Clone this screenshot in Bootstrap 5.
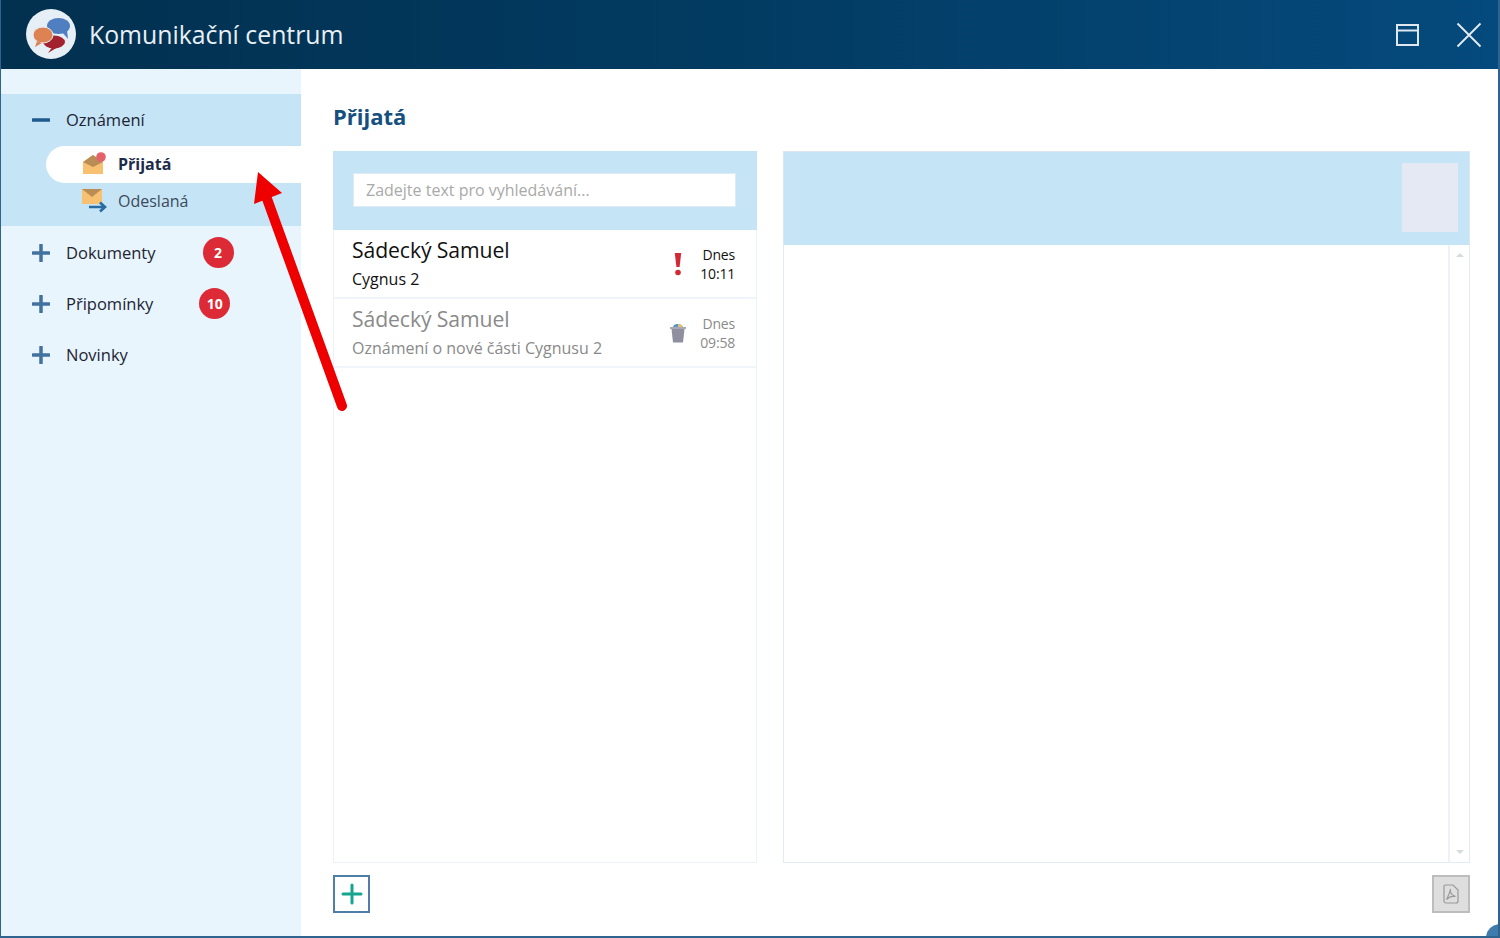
<!DOCTYPE html>
<html lang="cs">
<head>
<meta charset="utf-8">
<title>Komunikační centrum</title>
<link href="https://cdn.jsdelivr.net/npm/bootstrap@5.3.0/dist/css/bootstrap.min.css" rel="stylesheet">
<style>
html,body{height:100%;overflow:hidden;background:#fff}
body{font-family:"Open Sans","Liberation Sans",sans-serif;color:#1d2433}
.win{width:1500px;height:938px;position:relative;overflow:hidden;border:solid #2f6390;border-width:0 2px 2px 1px}
.win-corner{position:absolute;right:-2px;bottom:-2px;width:14px;height:14px;background:#3f7cab;border-radius:14px 0 0 0}
.titlebar{height:69px;margin:0 -2px 0 -1px;background:linear-gradient(90deg,#02304f 0%,#023a60 45%,#054a7d 100%);padding:0 18px 0 26px}
.logo-disc{width:50px;height:50px;border-radius:50%;background:#e6eff6;margin-top:-1px;line-height:0}
.app-name{font-size:24.8px;color:#e9f0f5;margin-left:13px;line-height:1}
.win-btn{background:none;border:0;padding:0;line-height:0}
.win-btns{gap:36px}
.body-row{height:867px}
.sidenav{width:300px;background:#e8f5fc;padding-top:25px;flex:none}
.grp-open{background:#c5e4f6;height:132px;padding-top:8px}
.nav-row{height:36px;font-size:16.5px;color:#1d2433;padding-left:31px}
.nav-row .sign{width:18px;height:18px;flex:none;margin-right:16px}
.sub-row{height:37px;margin-left:45px;padding:0 0 2px 36px;font-size:16px;color:#3d4a5c;border-radius:19px 0 0 19px}
.sub-row.on{background:#fff;font-weight:700;color:#1d2b4a;margin-top:8px}
.sub-row .mail{margin-right:11px;flex:none}
.row-doc{height:48px;margin-top:3px}
.row-rem{height:54px}
.row-new{height:48px}
.cnt{width:31px;height:31px;border-radius:50%;background:#dc2b36;color:#fff;font-size:14px;font-weight:700;flex:none;margin-bottom:2px}
.cnt-a{margin-left:47px}
.cnt-b{margin-left:46px}
.main-pane{padding:0 28px 0 32px;min-width:0}
.pane-title{font-size:22px;font-weight:700;color:#15507f;line-height:30px;margin:32px 0 20px}
.cols{height:712px;gap:26px}
.msg-col{width:424px;border:1px solid #edf2f9;flex:none}
.read-col{border:1px solid #e4ebf5;min-width:0}
.search-band{height:79px;margin:-1px -1px 0;background:#c5e4f6;padding:22px 21px 0 20px}
.search-inp{height:34px;border-radius:0;border:1px solid #dfeaf5;font-size:16px;padding:0 12px;box-shadow:none}
.search-inp::placeholder{color:#a9a9a9}
.msg-item{height:69px;padding:5px 21px 0 18px;border-width:0 0 2px!important;border-style:solid;border-color:#f0f5fc!important;color:#111;border-radius:0!important}
.msg-item.seen{color:#8a8a8a}
.who{font-size:21.2px;line-height:30px;letter-spacing:-.1px}
.what{font-size:16px;line-height:28px}
.stamp{font-size:14px;line-height:19px;text-align:right;width:38px;margin-top:10px;letter-spacing:-.2px}
.flag{width:24px;margin:15px 7px 0 0;text-align:center}
.read-band{height:94px;margin:-1px -1px 0;background:#c5e4f6;padding:11px 11px 0 0;border:1px solid #dde6ee;border-width:1px 1px 0}
.thumb{width:56px;height:69px;background:#e4e9f4}
.read-body{min-height:0}
.scroll-rail{width:21px;border-left:2px solid #eef1f7;height:100%}
.tri-up,.tri-down{width:0;height:0;border-left:4px solid transparent;border-right:4px solid transparent}
.tri-up{border-bottom:4px solid #d6dbe0}
.tri-down{border-top:4px solid #d6dbe0}
.foot-row{height:38px;margin-top:12px}
.add-btn{width:37px;height:38px;border:2px solid #4f7ea6;border-radius:0;padding:0;background:#fff;line-height:0}
.pdf-btn{width:38px;height:38px;border:2px solid #bdbdbd;border-radius:0;padding:0;background:#dedede;line-height:0}
.pointer-arrow{position:absolute;left:240px;top:160px;pointer-events:none}
</style>
</head>
<body>
<div class="win">
  <header class="titlebar d-flex align-items-center">
    <div class="logo-disc flex-none">
      <svg width="50" height="50" viewBox="0 0 50 50">
        <ellipse cx="32.500" cy="17" rx="11.500" ry="8" fill="#4f7fc0"/>
        <path d="M36 23l6 7-1-9z" fill="#4f7fc0"/>
        <ellipse cx="28" cy="33" rx="11" ry="6.500" fill="#a3222f"/>
        <path d="M27 37l-5 7 10-6z" fill="#a3222f"/>
        <ellipse cx="17" cy="26" rx="10" ry="8" fill="#dd8353" stroke="#e6eff6"/>
        <path d="M11 32l-2 6 7-4z" fill="#dd8353"/>
      </svg>
    </div>
    <div class="app-name">Komunikační centrum</div>
    <div class="ms-auto d-flex align-items-center win-btns">
      <button class="win-btn" aria-label="Maximalizovat"><svg width="24" height="24" viewBox="0 0 24 24" fill="none" stroke="#dfe8ef" stroke-width="2"><rect x="1" y="2" width="21" height="20"/><path d="M1 7.500h21"/></svg></button>
      <button class="win-btn" aria-label="Zavřít"><svg width="26" height="26" viewBox="0 0 26 26" fill="none" stroke="#e6edf2" stroke-width="1.800"><path d="M1.500 1.500l23 23M24.500 1.500l-23 23"/></svg></button>
    </div>
  </header>

  <div class="body-row d-flex">
    <nav class="sidenav">
      <div class="grp-open">
        <div class="nav-row d-flex align-items-center">
          <svg class="sign" viewBox="0 0 18 18"><path d="M1 9h16" stroke="#1e5a8e" stroke-width="3.500" stroke-linecap="round"/></svg>Oznámení
        </div>
        <div class="sub-row on d-flex align-items-center">
          <svg class="mail" width="25" height="25" viewBox="0 0 25 25">
            <path d="M1 11l10-7 10 7v12H1z" fill="#f7c171"/>
            <path d="M1 11l10-7 10 7-10 5z" fill="#b98d55"/>
            <circle cx="19" cy="6" r="4.800" fill="#e4636b"/>
          </svg>Přijatá
        </div>
        <div class="sub-row d-flex align-items-center">
          <svg class="mail" width="25" height="25" viewBox="0 0 25 25">
            <path d="M0 1h20v15H0z" fill="#f7c171"/>
            <path d="M0 1h20L10 9z" fill="#b98d55"/>
            <path d="M7 19h15M18 14.500l5 4.500-5 4.500" fill="none" stroke="#2a6ba0" stroke-width="2.600"/>
          </svg>Odeslaná
        </div>
      </div>
      <div class="nav-row row-doc d-flex align-items-center">
        <svg class="sign" viewBox="0 0 18 18"><path d="M1 9h16M9 1v16" stroke="#41729f" stroke-width="3.500" stroke-linecap="round"/></svg>Dokumenty
        <span class="cnt cnt-a d-flex align-items-center justify-content-center">2</span>
      </div>
      <div class="nav-row row-rem d-flex align-items-center">
        <svg class="sign" viewBox="0 0 18 18"><path d="M1 9h16M9 1v16" stroke="#41729f" stroke-width="3.500" stroke-linecap="round"/></svg>Připomínky
        <span class="cnt cnt-b d-flex align-items-center justify-content-center">10</span>
      </div>
      <div class="nav-row row-new d-flex align-items-center">
        <svg class="sign" viewBox="0 0 18 18"><path d="M1 9h16M9 1v16" stroke="#41729f" stroke-width="3.500" stroke-linecap="round"/></svg>Novinky
      </div>
    </nav>

    <main class="main-pane flex-grow-1 d-flex flex-column">
      <h1 class="pane-title">Přijatá</h1>
      <div class="cols d-flex">
        <section class="msg-col d-flex flex-column">
          <div class="search-band">
            <input class="form-control search-inp" type="text" placeholder="Zadejte text pro vyhledávání...">
          </div>
          <div class="list-group list-group-flush">
            <div class="list-group-item msg-item d-flex">
              <div class="flex-grow-1">
                <div class="who">Sádecký Samuel</div>
                <div class="what">Cygnus 2</div>
              </div>
              <div class="flag"><svg width="8" height="24" viewBox="0 0 8 24"><path d="M.8 1h6.400L5.600 15H2.400z" fill="#d12a35"/><circle cx="4" cy="20.500" r="2.800" fill="#d12a35"/></svg></div>
              <div class="stamp">Dnes<br>10:11</div>
            </div>
            <div class="list-group-item msg-item seen d-flex">
              <div class="flex-grow-1">
                <div class="who">Sádecký Samuel</div>
                <div class="what">Oznámení o nové části Cygnusu 2</div>
              </div>
              <div class="flag"><svg width="16" height="20" viewBox="0 0 16 20"><path d="M3 4c1-3 3-3 5-3s4 1 5 3z" fill="#5c93c9"/><path d="M8 1c2 0 4 1 5 3H8z" fill="#e6c167"/><path d="M0 4h16v2H0z" fill="#a9a9b3"/><path d="M1.500 6h13l-1.500 13.500H3z" fill="#8f8fa0"/></svg></div>
              <div class="stamp">Dnes<br>09:58</div>
            </div>
          </div>
        </section>
        <section class="read-col flex-grow-1 d-flex flex-column">
          <div class="read-band d-flex justify-content-end"><div class="thumb"></div></div>
          <div class="read-body flex-grow-1 d-flex justify-content-end">
            <div class="scroll-rail d-flex flex-column align-items-center justify-content-between py-2">
              <span class="tri-up"></span><span class="tri-down"></span>
            </div>
          </div>
        </section>
      </div>
      <div class="foot-row d-flex justify-content-between">
        <button class="btn add-btn" aria-label="Přidat"><svg width="22" height="22" viewBox="0 0 22 22"><path d="M2 11h18M11 2v18" stroke="#15a58f" stroke-width="3" stroke-linecap="round"/></svg></button>
        <button class="btn pdf-btn" aria-label="PDF"><svg width="16" height="20" viewBox="0 0 16 20" fill="none" stroke="#9a9a9a" stroke-width="1.200"><path d="M2 1h8l5 5v11a2 2 0 0 1-2 2H3a2 2 0 0 1-2-2V2z"/><path d="M7.500 5c-.8 3 1.200 6 5 7.500-3-.5-6.500 0-9 3 1.500-3 3.500-7 4-10.500z"/></svg></button>
      </div>
    </main>
  </div>

  <div class="win-corner"></div>
  <svg class="pointer-arrow" width="115" height="260" viewBox="0 0 115 260">
    <path d="M101 246L25 36" stroke="#ee0000" stroke-width="10" stroke-linecap="round" fill="none"/>
    <path d="M17 12L13 44L41 33z" fill="#ee0000"/>
  </svg>
</div>
</body>
</html>
